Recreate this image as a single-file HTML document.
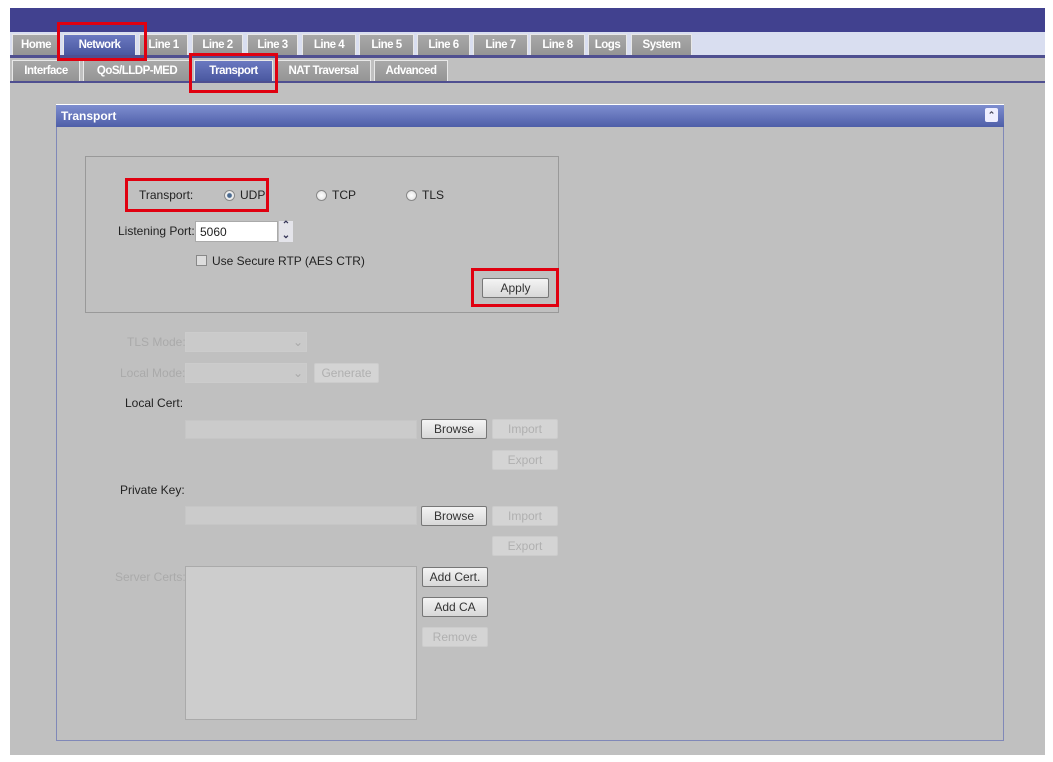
<!DOCTYPE html>
<html><head><style>
body{margin:0;width:1053px;height:762px;background:#fff;position:relative;overflow:hidden;font-family:"Liberation Sans",sans-serif;font-size:12px;color:#222}
div,span{position:absolute;box-sizing:border-box}
.tab{top:34px;height:21px;background:linear-gradient(#a8a8a8,#959595);color:#fff;font-weight:bold;font-size:11.5px;text-align:center;line-height:21px;border:1px solid #e8e8e8;border-bottom:none;letter-spacing:-0.5px}
.sub{top:60px;height:21px}
.act{background:linear-gradient(#6a78c0,#4a58a0)}
.red{border:3px solid #e00010}
.btn{height:20px;border:1px solid #777;border-radius:2px;background:linear-gradient(#f4f4f4,#d8d8d8);text-align:center;line-height:18px;color:#333}
.dis{border:1px solid #ccc;background:#d4d4d4;color:#b0b0b0}
.lbl{color:#222}
.dl{color:#aaa}
.rad{width:11px;height:11px;border-radius:50%;border:1px solid #888;background:radial-gradient(#fff,#ddd)}
</style></head><body>
<div style="left:10px;top:8px;width:1035px;height:747px;background:#c0c0c0"></div>
<div style="left:10px;top:8px;width:1035px;height:24px;background:#41418f"></div>
<div style="left:10px;top:32px;width:1035px;height:23px;background:#d9def0"></div>
<div style="left:10px;top:55px;width:1035px;height:3px;background:#4f4f90"></div>
<div style="left:10px;top:81px;width:1035px;height:2px;background:#4f4f90"></div>

<div class="tab" style="left:12px;width:48px">Home</div>
<div class="tab act" style="left:63px;width:73px">Network</div>
<div class="tab" style="left:139px;width:49px">Line 1</div>
<div class="tab" style="left:192px;width:51px">Line 2</div>
<div class="tab" style="left:247px;width:51px">Line 3</div>
<div class="tab" style="left:302px;width:54px">Line 4</div>
<div class="tab" style="left:359px;width:55px">Line 5</div>
<div class="tab" style="left:417px;width:53px">Line 6</div>
<div class="tab" style="left:473px;width:55px">Line 7</div>
<div class="tab" style="left:530px;width:55px">Line 8</div>
<div class="tab" style="left:588px;width:39px">Logs</div>
<div class="tab" style="left:631px;width:61px">System</div>

<div class="tab sub" style="left:12px;width:68px">Interface</div>
<div class="tab sub" style="left:83px;width:108px">QoS/LLDP-MED</div>
<div class="tab sub act" style="left:194px;width:79px">Transport</div>
<div class="tab sub" style="left:276px;width:95px">NAT Traversal</div>
<div class="tab sub" style="left:374px;width:74px">Advanced</div>

<div style="left:56px;top:104px;width:948px;height:637px;border:1px solid #8088b8;border-top:none"></div>
<div style="left:56px;top:104px;width:948px;height:23px;background:linear-gradient(#7e8ed0,#4e5ea8);color:#fff;font-weight:bold;line-height:22px;padding-left:5px;border-top:1px solid #fff">Transport</div>
<div style="left:985px;top:108px;width:13px;height:14px;background:#eef;border-radius:2px;color:#445;font-size:9px;line-height:14px;text-align:center;font-weight:bold">&#8963;</div>

<div style="left:85px;top:156px;width:474px;height:157px;border:1px solid #999"></div>
<span class="lbl" style="left:139px;top:188px">Transport:</span>
<div class="rad" style="left:224px;top:190px;background:radial-gradient(#4a6a90 30%,#eee 45%)"></div><span style="left:240px;top:188px">UDP</span>
<div class="rad" style="left:316px;top:190px"></div><span style="left:332px;top:188px">TCP</span>
<div class="rad" style="left:406px;top:190px"></div><span style="left:422px;top:188px">TLS</span>
<span class="lbl" style="left:118px;top:224px">Listening Port:</span>
<div style="left:195px;top:221px;width:83px;height:21px;background:#fff;border:1px solid #aaa;padding:3px 4px">5060</div>
<div style="left:279px;top:221px;width:14px;height:21px;font-size:10px;line-height:10px;color:#335;text-align:center;font-weight:bold;background:#e4e4ea">&#8963;<br>&#8964;</div>
<div style="left:196px;top:255px;width:11px;height:11px;border:1px solid #888;background:#ddd"></div>
<span style="left:212px;top:254px">Use Secure RTP (AES CTR)</span>
<div class="btn" style="left:482px;top:278px;width:67px">Apply</div>

<span class="dl" style="left:127px;top:335px">TLS Mode:</span>
<div style="left:185px;top:332px;width:122px;height:20px;border:1px solid #ccc;background:#cacaca"></div>
<span class="dl" style="left:293px;top:335px">&#8964;</span>
<span class="dl" style="left:120px;top:366px">Local Mode:</span>
<div style="left:185px;top:363px;width:122px;height:20px;border:1px solid #ccc;background:#cacaca"></div>
<span class="dl" style="left:293px;top:366px">&#8964;</span>
<div class="btn dis" style="left:314px;top:363px;width:65px">Generate</div>

<span class="lbl" style="left:125px;top:396px">Local Cert:</span>
<div style="left:185px;top:420px;width:232px;height:19px;background:#cbcbcb;border:1px solid #c6c6c6"></div>
<div class="btn" style="left:421px;top:419px;width:66px">Browse</div>
<div class="btn dis" style="left:492px;top:419px;width:66px">Import</div>
<div class="btn dis" style="left:492px;top:450px;width:66px">Export</div>

<span class="lbl" style="left:120px;top:483px">Private Key:</span>
<div style="left:185px;top:506px;width:232px;height:19px;background:#cbcbcb;border:1px solid #c6c6c6"></div>
<div class="btn" style="left:421px;top:506px;width:66px">Browse</div>
<div class="btn dis" style="left:492px;top:506px;width:66px">Import</div>
<div class="btn dis" style="left:492px;top:536px;width:66px">Export</div>

<span class="dl" style="left:115px;top:570px">Server Certs:</span>
<div style="left:185px;top:566px;width:232px;height:154px;background:#cdcdcd;border:1px solid #aaa"></div>
<div class="btn" style="left:422px;top:567px;width:66px">Add Cert.</div>
<div class="btn" style="left:422px;top:597px;width:66px">Add CA</div>
<div class="btn dis" style="left:422px;top:627px;width:66px">Remove</div>

<div class="red" style="left:57px;top:22px;width:90px;height:39px"></div>
<div class="red" style="left:189px;top:53px;width:89px;height:40px"></div>
<div class="red" style="left:125px;top:178px;width:144px;height:34px"></div>
<div class="red" style="left:471px;top:268px;width:88px;height:39px"></div>
</body></html>
